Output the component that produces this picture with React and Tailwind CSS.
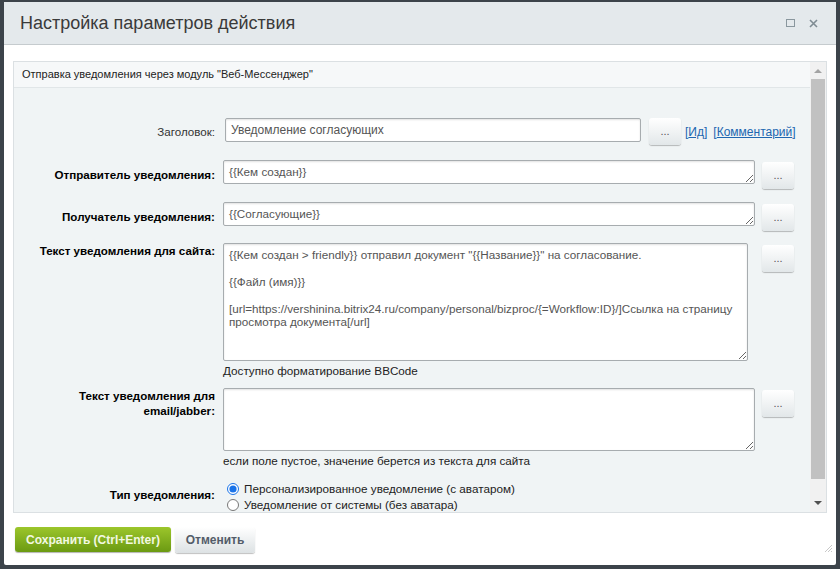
import React from "react";

const DotsButton = () => (
  <button className="w-[32px] h-[27px] rounded-[3px] bg-gradient-to-b from-white to-[#e2e7e9] shadow-[0_1px_1px_rgba(0,0,0,0.25)] text-[#555] text-[11px] leading-none flex items-center justify-center shrink-0">
    ...
  </button>
);

const Label = ({ children, bold = true, top = "" }) => (
  <div
    className={`w-[209px] shrink-0 pr-[8px] text-right text-[11.6px] text-[#000] ${
      bold ? "font-bold" : ""
    } ${top ? `${top} leading-[15px]` : "self-center"}`}
  >
    {children}
  </div>
);

const fieldCls =
  "block bg-white border border-[#a7acaf] rounded-[2px] shadow-[inset_0_1px_2px_rgba(0,0,0,0.12)] px-[5px] text-[11.7px] text-[#555] outline-none";

export default function App() {
  return (
    <div
      className="w-[840px] h-[569px] bg-[#3c434a] pt-[2px] px-[4px] overflow-hidden"
      style={{ fontFamily: '"Liberation Sans", Arial, sans-serif' }}
    >
      <div className="bg-white h-[563px] rounded-[2px] flex flex-col">
        {/* Header */}
        <div className="h-[43px] shrink-0 bg-[#e4e9ec] border-b border-[#c5cbce] flex items-center pl-[16px] pr-[18px]">
          <h1 className="flex-1 text-[18px] text-[#3a3a3a] pt-[1px]">
            Настройка параметров действия
          </h1>
          <div className="flex items-center gap-[14px] text-[#8a979e]">
            <div className="w-[9px] h-[8px] border border-[#8a979e]"></div>
            <svg width="9" height="9" viewBox="0 0 9 9">
              <path d="M1 1L8 8M8 1L1 8" stroke="#7f8c93" strokeWidth="1.6" />
            </svg>
          </div>
        </div>

        {/* Body */}
        <div className="px-[9px] pt-[16px]">
          <div className="h-[452px] border border-[#dbe0e3] flex">
            <div className="flex-1 flex flex-col overflow-hidden">
              <div className="h-[26px] shrink-0 bg-[#f6f8f9] border-b border-[#e1e6e8] flex items-center px-[8px] text-[11px] text-[#222]">
                Отправка уведомления через модуль "Веб-Мессенджер"
              </div>
              <div className="flex-1 bg-[#f0f4f5] pt-[30px] flex flex-col">
                {/* Заголовок */}
                <div className="flex items-start h-[27px]">
                  <Label bold={false}>
                    <span className="text-[#333]">Заголовок:</span>
                  </Label>
                  <input
                    className={`${fieldCls} w-[416px] h-[24px] ml-[2px] !text-[12px] text-[#444]`}
                    defaultValue="Уведомление согласующих"
                  />
                  <div className="ml-[8px]">
                    <DotsButton />
                  </div>
                  <div className="self-center ml-[4px] text-[12px] text-[#2066b0] flex gap-[6px]">
                    <span>
                      [<span className="underline">Ид</span>]
                    </span>
                    <span>
                      [<span className="underline">Комментарий</span>]
                    </span>
                  </div>
                </div>

                {/* Отправитель */}
                <div className="flex items-start mt-[15px]">
                  <Label>Отправитель уведомления:</Label>
                  <textarea
                    className={`${fieldCls} w-[532px] h-[24px] pt-[4px] leading-[14px]`}
                    defaultValue="{{Кем создан}}"
                  />
                  <div className="ml-[7px] mt-[2px]">
                    <DotsButton />
                  </div>
                </div>

                {/* Получатель */}
                <div className="flex items-start mt-[13px]">
                  <Label>Получатель уведомления:</Label>
                  <textarea
                    className={`${fieldCls} w-[532px] h-[24px] pt-[4px] leading-[14px]`}
                    defaultValue="{{Согласующие}}"
                  />
                  <div className="ml-[7px] mt-[2px]">
                    <DotsButton />
                  </div>
                </div>

                {/* Текст для сайта */}
                <div className="flex items-start mt-[12px]">
                  <Label top="pt-[0px]">Текст уведомления для сайта:</Label>
                  <div className="flex flex-col">
                    <textarea
                      className={`${fieldCls} w-[525px] h-[118px] pt-[4px] leading-[13.4px]`}
                      defaultValue={
                        '{{Кем создан > friendly}} отправил документ "{{Название}}" на согласование.\n\n{{Файл (имя)}}\n\n[url=https://vershinina.bitrix24.ru/company/personal/bizproc/{=Workflow:ID}/]Ссылка на страницу просмотра документа[/url]'
                      }
                    />
                    <div className="text-[11.7px] text-[#222] mt-[3px] leading-[14px]">
                      Доступно форматирование BBCode
                    </div>
                  </div>
                  <div className="ml-[14px] mt-[2px]">
                    <DotsButton />
                  </div>
                </div>

                {/* Текст для email */}
                <div className="flex items-start mt-[10px]">
                  <Label top="pt-[0px]">
                    Текст уведомления для
                    <br />
                    email/jabber:
                  </Label>
                  <div className="flex flex-col">
                    <textarea
                      className={`${fieldCls} w-[532px] h-[63px] pt-[4px]`}
                      defaultValue=""
                    />
                    <div className="text-[11.7px] text-[#222] mt-[3px] leading-[14px]">
                      если поле пустое, значение берется из текста для сайта
                    </div>
                  </div>
                  <div className="ml-[7px] mt-[2px]">
                    <DotsButton />
                  </div>
                </div>

                {/* Тип уведомления */}
                <div className="flex items-start mt-[12px]">
                  <Label top="pt-[7px]">Тип уведомления:</Label>
                  <div className="flex flex-col text-[11.7px] text-[#222] leading-[16px] pt-[1px] pl-[4px]">
                    <label className="flex items-center gap-[5px]">
                      <input
                        type="radio"
                        name="t"
                        defaultChecked
                        className="w-[12px] h-[12px] m-0 accent-[#1a73e8]"
                      />
                      Персонализированное уведомление (с аватаром)
                    </label>
                    <label className="flex items-center gap-[5px]">
                      <input
                        type="radio"
                        name="t"
                        className="w-[12px] h-[12px] m-0"
                      />
                      Уведомление от системы (без аватара)
                    </label>
                  </div>
                </div>
              </div>
            </div>

            {/* Scrollbar */}
            <div className="w-[16px] shrink-0 bg-[#f1f1f1] flex flex-col items-center">
              <div className="h-[17px] flex items-center justify-center">
                <svg width="8" height="5" viewBox="0 0 8 5">
                  <path d="M0 5L4 1L8 5Z" fill="#a3a3a3" />
                </svg>
              </div>
              <div className="w-[14px] h-[400px] bg-[#c1c1c1]"></div>
              <div className="flex-1"></div>
              <div className="h-[17px] flex items-center justify-center">
                <svg width="8" height="5" viewBox="0 0 8 5">
                  <path d="M0 0L8 0L4 4Z" fill="#505050" />
                </svg>
              </div>
            </div>
          </div>
        </div>

        {/* Footer */}
        <div className="flex items-start gap-[4px] pl-[11px] pt-[14px]">
          <button className="w-[156px] h-[25px] rounded-[3px] bg-gradient-to-b from-[#9cc62b] to-[#6b9a12] text-[#f2f8e2] text-[12px] font-bold shadow-[0_1px_1px_rgba(0,0,0,0.3)]">
            Сохранить (Ctrl+Enter)
          </button>
          <button className="w-[80px] h-[26px] rounded-[3px] bg-gradient-to-b from-white to-[#dde2e4] text-[#535c69] text-[12px] font-bold shadow-[0_1px_1px_rgba(0,0,0,0.25)]">
            Отменить
          </button>
          <div className="flex-1 flex justify-end self-end pr-[3px] pt-[6px]">
            <svg width="10" height="10" viewBox="0 0 10 10">
              <path d="M9 2L2 9M9 5L5 9M9 8L8 9" stroke="#c8c8c8" strokeWidth="1" />
            </svg>
          </div>
        </div>
      </div>
    </div>
  );
}
